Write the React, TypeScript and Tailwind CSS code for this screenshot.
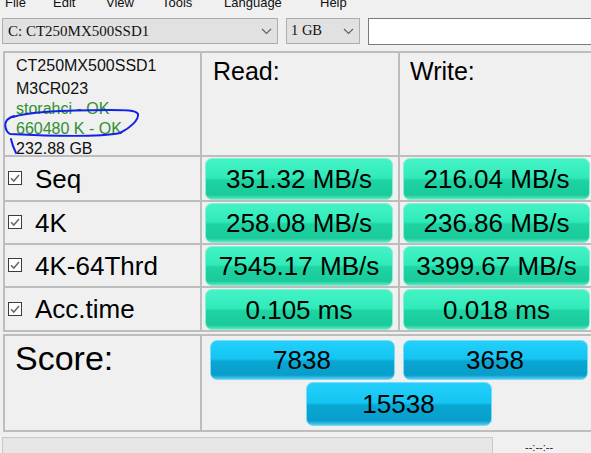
import React from "react";

function Chevron() {
  return (
    <svg width="11" height="7" viewBox="0 0 11 7" className="shrink-0">
      <polyline points="1,1 5.5,5.5 10,1" fill="none" stroke="#606060" strokeWidth="1.2" />
    </svg>
  );
}

function Check() {
  return (
    <svg width="15" height="15" viewBox="0 0 15 15" className="shrink-0">
      <rect x="0.5" y="0.5" width="13" height="13" fill="#ffffff" stroke="#3c3c3c" strokeWidth="1" />
      <polyline points="3,7.2 5.8,10 11,4" fill="none" stroke="#6a6a6a" strokeWidth="1.6" />
    </svg>
  );
}

function GreenBtn({ children }: { children: React.ReactNode }) {
  return (
    <div className="flex h-full w-full items-center justify-center rounded-[7px] border border-[#86efd2] bg-[linear-gradient(to_bottom,#44f3c6_0%,#30eab9_47%,#1fd3a3_53%,#19cb9a_90%,#5fe6c2_100%)] text-[26px] leading-none text-black">
      {children}
    </div>
  );
}

function BlueBtn({ children, className }: { children: React.ReactNode; className: string }) {
  return (
    <div
      className={
        "flex items-center justify-center rounded-[7px] border border-[#7ad9f6] bg-[linear-gradient(to_bottom,#22d0fa_0%,#14c4f2_47%,#0aa6d2_53%,#089ecb_90%,#56cdef_100%)] text-[26px] leading-none text-black " +
        className
      }
    >
      {children}
    </div>
  );
}

const rows = [
  { label: "Seq", r: "351.32 MB/s", w: "216.04 MB/s" },
  { label: "4K", r: "258.08 MB/s", w: "236.86 MB/s" },
  { label: "4K-64Thrd", r: "7545.17 MB/s", w: "3399.67 MB/s" },
  { label: "Acc.time", r: "0.105 ms", w: "0.018 ms" },
];

export default function App() {
  return (
    <div className="relative h-[453px] w-[591px] overflow-hidden bg-[#f0f0f0] font-['Liberation_Sans',Arial,sans-serif] text-black">
      {/* menu bar (cut off at the top, as in the window capture) */}
      <div className="h-[18px] overflow-hidden">
        <div className="-mt-[5px] flex pl-[5px] text-[13px] leading-[16px] text-[#111]">
          <span className="w-[48px] shrink-0">File</span>
          <span className="w-[53px] shrink-0">Edit</span>
          <span className="w-[56px] shrink-0">View</span>
          <span className="w-[62px] shrink-0">Tools</span>
          <span className="w-[96px] shrink-0">Language</span>
          <span className="shrink-0">Help</span>
        </div>
      </div>

      {/* toolbar */}
      <div className="flex items-start pl-[2px]">
        <div className="flex h-[26px] w-[276px] shrink-0 items-center justify-between border border-[#adadad] bg-[#e1e1e1] pl-[5px] pr-[5px] font-['Liberation_Serif',serif] text-[15px] text-[#111]">
          <span>C: CT250MX500SSD1</span>
          <Chevron />
        </div>
        <div className="ml-[8px] flex h-[26px] w-[74px] shrink-0 items-center justify-between border border-[#adadad] bg-[#e1e1e1] pl-[4px] pr-[5px] font-['Liberation_Serif',serif] text-[14.5px] text-[#111]">
          <span>1 GB</span>
          <Chevron />
        </div>
        <div className="ml-[8px] h-[27px] w-[240px] shrink-0 border border-[#7a7a7a] bg-white" />
      </div>

      {/* main grid */}
      <div className="ml-[3px] mt-[6px] grid w-[594px] grid-cols-[195px_196px_195px] grid-rows-[102px_43px_41px_41px_42px] gap-[2px] bg-[#bdbdbd] p-[2px]">
        <div className="bg-[#f0f0f0] pl-[11px] pt-[3px] text-[16px] leading-[20px] text-[#111]">
          <div className="mb-[3px]">CT250MX500SSD1</div>
          <div>M3CR023</div>
          <div className="text-[#2f8f2f]">storahci - OK</div>
          <div className="text-[#2f8f2f]">660480 K - OK</div>
          <div>232.88 GB</div>
        </div>
        <div className="bg-[#f0f0f0] pl-[11px] pt-[3px] text-[25px] leading-[30px]">Read:</div>
        <div className="bg-[#f0f0f0] pl-[10px] pt-[3px] text-[25px] leading-[30px]">Write:</div>

        {rows.map((row) => (
          <React.Fragment key={row.label}>
            <div className="flex items-center gap-[12px] bg-[#f0f0f0] pl-[3px] text-[26px] leading-none">
              <Check />
              <span>{row.label}</span>
            </div>
            <div className="flex bg-[#f0f0f0] pl-[3px] pr-[5px] pt-[1px]">
              <GreenBtn>{row.r}</GreenBtn>
            </div>
            <div className="flex bg-[#f0f0f0] pl-[3px] pr-[5px] pt-[1px]">
              <GreenBtn>{row.w}</GreenBtn>
            </div>
          </React.Fragment>
        ))}
      </div>

      {/* score */}
      <div className="ml-[3px] mt-[2px] grid h-[98px] w-[594px] grid-cols-[195px_1fr] gap-[2px] bg-[#bdbdbd] p-[2px]">
        <div className="bg-[#f0f0f0] pl-[10px] pt-[5px] text-[34px] leading-none">Score:</div>
        <div className="flex flex-col items-center bg-[#f0f0f0] pt-[4px]">
          <div className="flex gap-[8px]">
            <BlueBtn className="h-[40px] w-[185px]">7838</BlueBtn>
            <BlueBtn className="h-[40px] w-[185px]">3658</BlueBtn>
          </div>
          <BlueBtn className="mt-[2px] h-[44px] w-[186px]">15538</BlueBtn>
        </div>
      </div>

      {/* status bar */}
      <div className="mt-[5px] flex">
        <div className="ml-[2px] h-[20px] w-[491px] shrink-0 border border-[#c8c8c8] bg-[#e6e6e6]" />
        <div className="ml-[32px] pt-[4px] text-[11px] leading-[12px] text-[#222]">--:--:--</div>
      </div>

      {/* hand-drawn blue annotation */}
      <svg className="pointer-events-none absolute left-0 top-0" width="591" height="453" viewBox="0 0 591 453">
        <path
          d="M13 117 C 30 111, 70 110, 110 110 C 125 110, 136 110, 138 114 C 139 120, 130 128, 120 133 C 100 137, 50 136, 10 134 C 5 131, 4 124, 7 120 C 9 118, 11 117, 14 116"
          fill="none"
          stroke="#1222e6"
          strokeWidth="2"
          strokeLinecap="round"
        />
        <path d="M11 139 C 12 144, 14 149, 16 153" fill="none" stroke="#1222e6" strokeWidth="2" strokeLinecap="round" />
      </svg>
    </div>
  );
}
